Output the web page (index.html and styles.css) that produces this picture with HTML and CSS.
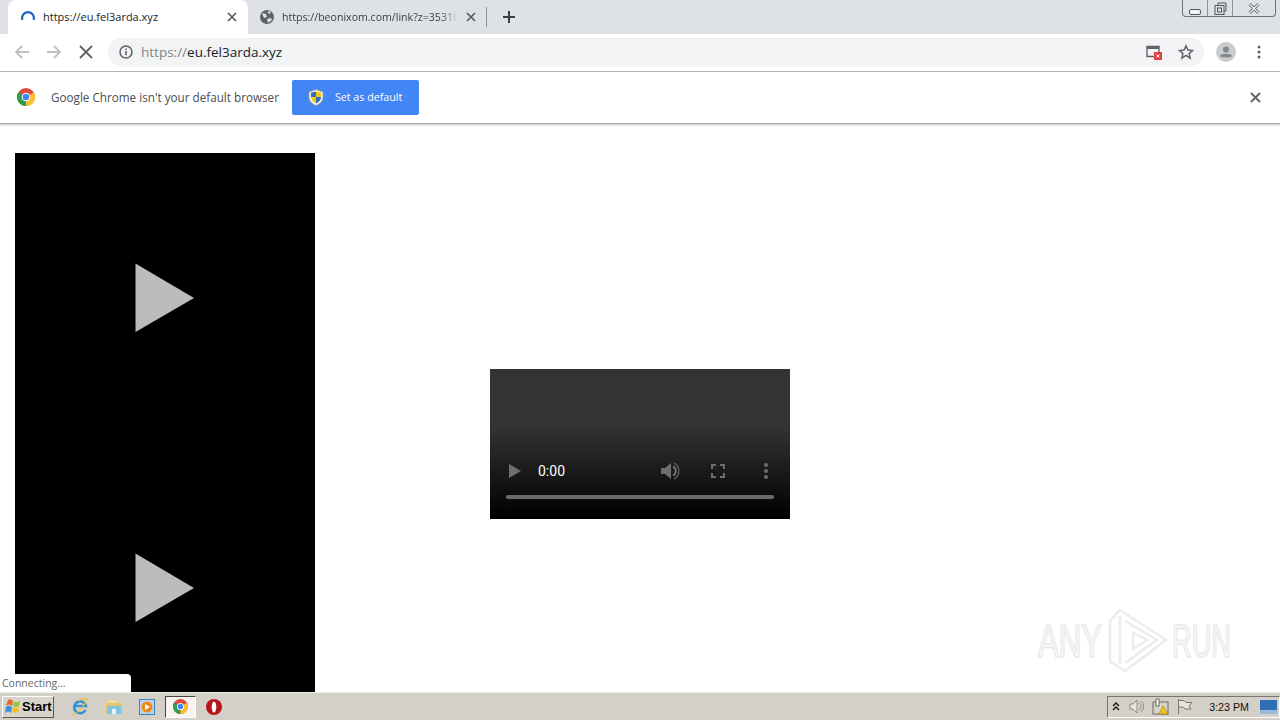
FILE: index.html
```html
<!DOCTYPE html>
<html lang="en">
<head>
    <meta charset="UTF-8">
    <title>https://eu.fel3arda.xyz</title>
    <link rel="stylesheet" href="styles.css">
</head>
<body>
  <div class="tabstrip">
    <div class="tab active">
      <svg class="tab-icon" width="16" height="16" viewBox="0 0 16 16"><path d="M2.300 11A6 6 0 1 1 13.700 11" fill="none" stroke="#1a63c9" stroke-width="2.200"/></svg>
      <span class="tab-title">https://eu.fel3arda.xyz</span>
      <svg class="tab-close" width="10" height="10" viewBox="0 0 10 10"><path d="M1 1L9 9M9 1L1 9" stroke="#555a60" stroke-width="1.700"/></svg>
    </div>
    <div class="tab second">
      <svg class="tab-icon" width="16" height="16" viewBox="0 0 16 16"><circle cx="8" cy="8" r="7" fill="#5f6368"/><path d="M3 4l4 1 1 3-3 1zM9 2l3 1-1 2-2-1zM8 10l4-1 1 2-4 3z" fill="#dee1e6"/></svg>
      <span class="tab-title fade">https://beonixom.com/link?z=35316</span>
      <svg class="tab-close" width="10" height="10" viewBox="0 0 10 10"><path d="M1 1L9 9M9 1L1 9" stroke="#555a60" stroke-width="1.700"/></svg>
    </div>
    <div class="tab-sep"></div>
    <svg class="new-tab" width="12" height="12" viewBox="0 0 12 12"><path d="M6 0V12M0 6H12" stroke="#3c4043" stroke-width="2"/></svg>
    <div class="win-buttons">
      <div class="win-btn min"><svg width="12" height="6" viewBox="0 0 12 6"><rect x="0.500" y="0.500" width="11" height="5" rx="1.500" fill="#f2f4f7" stroke="#555"/></svg></div>
      <div class="win-btn max"><svg width="13" height="13" viewBox="0 0 13 13"><path d="M4 3V1h8v8h-2" fill="none" stroke="#555"/><rect x="1" y="3.500" width="9" height="9" fill="none" stroke="#555"/><rect x="3.500" y="6" width="4" height="4" fill="none" stroke="#555"/></svg></div>
      <div class="win-btn close"><svg width="12" height="11" viewBox="0 0 12 11"><path d="M1.500 1L10.500 10M10.500 1L1.500 10" stroke="#666" stroke-width="3"/><path d="M1.500 1L10.500 10M10.500 1L1.500 10" stroke="#f2f4f7" stroke-width="1.200"/></svg></div>
    </div>
  </div>

  <div class="toolbar">
    <svg class="nav-icon" width="16" height="16" viewBox="0 0 16 16"><path d="M15 8H2M8 2L2 8l6 6" fill="none" stroke="#bdc1c6" stroke-width="1.800"/></svg>
    <svg class="nav-icon" width="16" height="16" viewBox="0 0 16 16"><path d="M1 8h13M8 2l6 6-6 6" fill="none" stroke="#bdc1c6" stroke-width="1.800"/></svg>
    <svg class="nav-icon stop" width="16" height="16" viewBox="0 0 16 16"><path d="M2 2L14 14M14 2L2 14" stroke="#5f6368" stroke-width="1.900"/></svg>
    <div class="omnibox">
      <svg class="info" width="14" height="14" viewBox="0 0 14 14"><circle cx="7" cy="7" r="6" fill="none" stroke="#5f6368" stroke-width="1.500"/><path d="M7 6v4.200M7 3.400v1.600" stroke="#5f6368" stroke-width="1.600"/></svg>
      <span class="url"><span class="scheme">https://</span>eu.fel3arda.xyz</span>
      <svg class="popup-blocked" width="16" height="15" viewBox="0 0 16 15"><path d="M1 1.500h12v10H1z" fill="none" stroke="#5f6368" stroke-width="1.400"/><rect x="1" y="1" width="12" height="3" fill="#5f6368"/><rect x="8" y="7" width="8" height="8" fill="#e0403a"/><path d="M10.500 9.500l3 3M13.500 9.500l-3 3" stroke="#fff"/></svg>
      <svg class="star" width="16" height="16" viewBox="0 0 16 16"><path d="M8 1.800l1.900 4.200 4.600.5-3.400 3.100 1 4.500L8 11.300l-4.100 2.800 1-4.500L1.500 6.500 6.100 6z" fill="none" stroke="#5f6368" stroke-width="1.500"/></svg>
    </div>
    <svg class="avatar" width="20" height="20" viewBox="0 0 20 20"><circle cx="10" cy="10" r="10" fill="#c9cbce"/><circle cx="10" cy="7.500" r="3" fill="#85888c"/><path d="M4 14c1-3 11-3 12 0-1 2-11 2-12 0z" fill="#85888c"/></svg>
    <svg class="menu" width="4" height="14" viewBox="0 0 4 14"><circle cx="2" cy="2" r="1.500" fill="#5f6368"/><circle cx="2" cy="7" r="1.500" fill="#5f6368"/><circle cx="2" cy="12" r="1.500" fill="#5f6368"/></svg>
  </div>

  <div class="infobar">
    <svg class="chrome-logo" width="18" height="18" viewBox="0 0 18 18"><circle cx="9" cy="9" r="9" fill="#dd4b3e"/><path d="M9 9L1.200 4.500A9 9 0 0 0 9 18z" fill="#2f9e52"/><path d="M9 9l7.800-4.500A9 9 0 0 1 9 18z" fill="#fbc02d"/><circle cx="9" cy="9" r="4.300" fill="#fff"/><circle cx="9" cy="9" r="3.300" fill="#4285f4"/></svg>
    <span class="infobar-text">Google Chrome isn't your default browser</span>
    <div class="default-btn">
      <svg width="16" height="17" viewBox="0 0 16 17"><path d="M8 0.500L15 3v5c0 4-3 7-7 8.500C4 15 1 12 1 8V3z" fill="#f4f4e8" stroke="#9aa3ad"/><path d="M8 2.500V8H3V3.800zM8 8h5c0 3-2 5-5 6.500z" fill="#2b6fc4"/><path d="M8 2.500l5 1.300V8H8zM8 8v6.500C5 13 3 11 3 8z" fill="#f2c811"/></svg>
      <span>Set as default</span>
    </div>
    <svg class="infobar-close" width="11" height="11" viewBox="0 0 11 11"><path d="M1 1L10 10M10 1L1 10" stroke="#5f6368" stroke-width="1.800"/></svg>
  </div>

  <div class="content">
    <div class="black-video">
      <svg class="big-play" width="60" height="70" viewBox="0 0 60 70"><path d="M0.500 0.500V69L59 35z" fill="#bcbcbc"/></svg>
      <svg class="big-play" width="60" height="70" viewBox="0 0 60 70"><path d="M0.500 0.500V69L59 35z" fill="#bcbcbc"/></svg>
    </div>
    <div class="video">
      <div class="controls">
        <svg width="12" height="14" viewBox="0 0 12 14"><path d="M0 0V14L12 7z" fill="#6e6e6e"/></svg>
        <span class="time">0:00</span>
        <svg class="vol" width="20" height="18" viewBox="0 0 20 18"><path d="M0 6h4l6-5v16l-6-5H0z" fill="#6e6e6e"/><path d="M12 4.500a5 5 0 0 1 0 9" fill="none" stroke="#6e6e6e" stroke-width="2"/><path d="M13 1a9 9 0 0 1 0 16" fill="none" stroke="#5a5a5a" stroke-width="1.500"/></svg>
        <svg class="full" width="14" height="14" viewBox="0 0 14 14"><path d="M1 5V1h4M9 1h4v4M13 9v4H9M5 13H1V9" fill="none" stroke="#6e6e6e" stroke-width="2"/></svg>
        <svg class="more" width="4" height="16" viewBox="0 0 4 16"><circle cx="2" cy="2" r="2" fill="#6e6e6e"/><circle cx="2" cy="8" r="2" fill="#6e6e6e"/><circle cx="2" cy="14" r="2" fill="#6e6e6e"/></svg>
      </div>
      <div class="timeline"></div>
    </div>
    <div class="status-bubble">Connecting...</div>
    <svg class="watermark" width="204" height="66" viewBox="0 0 204 66">
      <g fill="#fbfbfb" stroke="#ececec" stroke-width="2.200" font-family="Liberation Sans, sans-serif" font-size="47">
        <text x="1" y="49" textLength="64" lengthAdjust="spacingAndGlyphs">ANY</text>
        <text x="135" y="49" textLength="59" lengthAdjust="spacingAndGlyphs">RUN</text>
      </g>
      <path d="M83 2L129 32 88 63 73 53V13zM83 8V56M88 13L120 32 88 55M96 25L110 32 96 41z" fill="none" stroke="#ececec" stroke-width="2.500"/>
    </svg>
  </div>

  <div class="taskbar">
    <div class="start">
      <svg width="18" height="17" viewBox="0 0 18 17"><path d="M4 2C6 0 8 2 9 3L8 8C6 6 4 6 2 8z" fill="#e8642a"/><path d="M10 3c2 2 4 1 6 0l-1 5c-2 1-4 1-6 0z" fill="#8cc63f"/><path d="M2 9c2-2 4-1 6 0l-1 6c-2-2-4-2-6 0z" fill="#3a8fdc"/><path d="M9 9c2 1 4 1 6 0l-1 5c-2 1-4 1-6 0z" fill="#f5c11e"/></svg>
      <span>Start</span>
    </div>
    <div class="quick">
      <svg width="18" height="18" viewBox="0 0 18 18"><path d="M14.500 12A6 6 0 1 1 15 8H4" fill="none" stroke="#2f8fd8" stroke-width="2.600"/><path d="M1 17C5 17 14 8 16 1c-3-1-6 0-9 2" fill="none" stroke="#e8c040" stroke-width="1.100"/></svg>
      <svg width="18" height="17" viewBox="0 0 18 17"><path d="M1 5h16v11H1z" fill="#e8c56a"/><path d="M3 2h8l1 3H3z" fill="#f2dc9a"/><rect x="2" y="8" width="14" height="8" fill="#7ec3e0"/><rect x="7" y="11" width="4" height="5" fill="#e8f4f8"/></svg>
      <svg width="16" height="16" viewBox="0 0 16 16"><rect x="0.500" y="0.500" width="15" height="15" fill="#bcd4ea" stroke="#3d83c2"/><circle cx="8" cy="8" r="5.500" fill="#ee8a1c"/><path d="M6 5v6l5-3z" fill="#fff"/></svg>
      <div class="task-active">
        <svg width="15" height="15" viewBox="0 0 18 18"><circle cx="9" cy="9" r="9" fill="#dd4b3e"/><path d="M9 9L1.200 4.500A9 9 0 0 0 9 18z" fill="#2f9e52"/><path d="M9 9l7.800-4.500A9 9 0 0 1 9 18z" fill="#fbc02d"/><circle cx="9" cy="9" r="4.300" fill="#fff"/><circle cx="9" cy="9" r="3.300" fill="#4285f4"/></svg>
      </div>
      <svg width="16" height="16" viewBox="0 0 16 16"><circle cx="8" cy="8" r="8" fill="#b8141c"/><ellipse cx="8" cy="8" rx="2.300" ry="5.500" fill="#fff"/></svg>
    </div>
    <div class="tray">
      <svg class="chevrons" width="8" height="9" viewBox="0 0 8 9"><path d="M1 4l3-3 3 3M1 8l3-3 3 3" fill="none" stroke="#111" stroke-width="1.300"/></svg>
      <svg width="17" height="15" viewBox="0 0 17 15"><path d="M1 5h3l4-4v13l-4-4H1z" fill="#e8e6e0" stroke="#8a8a88"/><path d="M10 4a4 4 0 0 1 0 7M12 2a7 7 0 0 1 0 11" fill="none" stroke="#8a8a88"/></svg>
      <svg width="17" height="17" viewBox="0 0 17 17"><rect x="1" y="4" width="15" height="12" fill="#d8d4c8" stroke="#6a6a60"/><rect x="4" y="1" width="3" height="7" fill="#fff" stroke="#6a6a60"/><path d="M11 8l5 8H7z" fill="#f5c518" stroke="#8a6a10" stroke-width="0.500"/></svg>
      <svg class="flag" width="16" height="15" viewBox="0 0 16 15"><path d="M1.500 0v15" stroke="#77776f"/><path d="M2 1.500h5l2 2h6l-3 3.500 2 3H8L6 8H2" fill="#e6e4dc" stroke="#77776f"/></svg>
      <span class="clock">3:23 PM</span>
      <svg class="show-desktop" width="17" height="14" viewBox="0 0 17 14"><rect width="17" height="14" fill="#2f6fb4"/><rect y="10" width="17" height="4" fill="#9ab8d8"/></svg>
    </div>
  </div>
</body>
</html>
```

FILE: styles.css
```css
html, body {
  margin: 0;
  height: 720px;
  overflow: hidden;
  background: #fff;
  font-family: "Open Sans", "Noto Sans", sans-serif;
}
body {
  display: flex;
  flex-direction: column;
}
svg {
  display: block;
  flex: none;
}

/* tabs */
.tabstrip {
  height: 34px;
  flex: none;
  background: #dee1e6;
  display: flex;
  align-items: center;
}
.tab {
  height: 34px;
  display: flex;
  align-items: center;
  font-size: 11px;
  color: #3c4043;
}
.tab.active {
  width: 240px;
  margin-left: 8px;
  padding: 0 11px 0 12px;
  box-sizing: border-box;
  background: #fff;
  border-radius: 8px 8px 0 0;
  color: #222;
}
.tab.second {
  width: 238px;
  padding: 0 10px 0 11px;
  box-sizing: border-box;
  font-size: 10.600px;
}
.tab-icon {
  margin-right: 7px;
}
.tab-title {
  flex: 1;
  overflow: hidden;
  white-space: nowrap;
  margin-top: -1px;
}
.tab-title.fade {
  -webkit-mask-image: linear-gradient(to right, #000 90%, transparent);
  mask-image: linear-gradient(to right, #000 90%, transparent);
}
.tab-close {
  margin-left: 8px;
}
.tab-sep {
  width: 1px;
  height: 20px;
  background: #8c8f94;
}
.new-tab {
  margin-left: 16px;
}
.win-buttons {
  margin-left: auto;
  margin-right: 4px;
  align-self: flex-start;
  display: flex;
  height: 16px;
  border: 1px solid #6f7378;
  border-top: 0;
  border-radius: 0 0 4px 4px;
}
.win-btn {
  display: flex;
  align-items: center;
  justify-content: center;
  width: 24px;
  border-left: 1px solid #8f9398;
}
.win-btn.min {
  border-left: 0;
  align-items: flex-end;
  padding-bottom: 1px;
  box-sizing: border-box;
}
.win-btn.close {
  width: 42px;
}

/* toolbar */
.toolbar {
  height: 36px;
  flex: none;
  background: #fff;
  border-bottom: 1px solid #b5b7ba;
  display: flex;
  align-items: center;
  padding: 0 0 1px 14px;
}
.nav-icon {
  margin-right: 16px;
}
.nav-icon.stop {
  margin-right: 14px;
}
.omnibox {
  width: 1096px;
  height: 28px;
  background: #f1f3f4;
  border-radius: 14px;
  display: flex;
  align-items: center;
  padding-left: 11px;
  box-sizing: border-box;
}
.url {
  margin-left: 8px;
  font-size: 13.500px;
  color: #202124;
  flex: 1;
}
.scheme {
  color: #80868b;
}
.popup-blocked {
  margin-right: 16px;
}
.star {
  margin-right: 10px;
}
.avatar {
  margin-left: 12px;
}
.menu {
  margin-left: 21px;
}

/* infobar */
.infobar {
  height: 51px;
  flex: none;
  display: flex;
  align-items: center;
  padding-left: 17px;
  border-bottom: 1px solid #a9abae;
  box-shadow: 0 1px 2px rgba(0, 0, 0, 0.25);
  position: relative;
}
.chrome-logo {
  margin-top: -1px;
}
.infobar-text {
  margin: -2px 0 0 16px;
  font-size: 11.700px;
  color: #4a4d51;
  white-space: nowrap;
}
.default-btn {
  margin-left: 13px;
  width: 127px;
  height: 35px;
  background: #4285f4;
  border-radius: 2px;
  display: flex;
  align-items: center;
  padding-left: 16px;
  box-sizing: border-box;
  color: #fff;
  font-size: 10.700px;
}
.default-btn span {
  margin: -2px 0 0 11px;
}
.infobar-close {
  margin-left: auto;
  margin-right: 19px;
}

/* page */
.content {
  flex: 1;
  min-height: 0;
  position: relative;
  overflow: hidden;
  display: flex;
  align-items: flex-start;
  padding: 29px 0 0 15px;
}
.black-video {
  width: 300px;
  height: 600px;
  flex: none;
  background: #000;
  display: flex;
  flex-direction: column;
  align-items: center;
  padding-top: 110px;
  gap: 220px;
  box-sizing: border-box;
}
.video {
  margin: 216px 0 0 175px;
  width: 300px;
  height: 150px;
  flex: none;
  background: linear-gradient(to bottom, #333 0, #333 38%, #000 100%);
  display: flex;
  flex-direction: column;
  justify-content: flex-end;
  padding: 0 16px 20px;
  box-sizing: border-box;
}
.controls {
  display: flex;
  align-items: center;
  height: 20px;
  margin-bottom: 14px;
  padding-left: 3px;
}
.time {
  margin-left: 17px;
  color: #fff;
  font-size: 14px;
  font-family: Roboto, sans-serif;
}
.vol {
  margin-left: auto;
}
.full {
  margin-left: 30px;
}
.more {
  margin-left: 39px;
  margin-right: 6px;
}
.timeline {
  height: 4px;
  background: #6a6a6a;
  border-radius: 2px;
}
.status-bubble {
  position: absolute;
  left: 0;
  bottom: 0;
  width: 131px;
  height: 18px;
  background: #fff;
  border-radius: 0 4px 0 0;
  font-size: 10.500px;
  line-height: 18px;
  padding-left: 2px;
  box-sizing: border-box;
  color: #666;
}
.watermark {
  position: absolute;
  left: 1037px;
  top: 484px;
}

/* taskbar */
.taskbar {
  height: 27px;
  flex: none;
  background: #d4d0c8;
  border-top: 1px solid #f2f0ea;
  display: flex;
  align-items: center;
}
.start {
  margin-left: 2px;
  width: 52px;
  height: 22px;
  box-sizing: border-box;
  background: #d8d4cc;
  border: 1px solid;
  border-color: #fff #555 #555 #fff;
  display: flex;
  align-items: center;
  padding-left: 1px;
  font-family: "Liberation Sans", sans-serif;
  font-weight: bold;
  font-size: 13px;
  color: #000;
}
.quick {
  margin-left: 17px;
  display: flex;
  align-items: center;
  gap: 16px;
}
.task-active {
  width: 31px;
  height: 22px;
  margin: 0 -6px;
  box-sizing: border-box;
  border: 1px solid;
  border-color: #444 #fff #fff #444;
  background: #f6f5f2;
  display: flex;
  align-items: center;
  justify-content: center;
}
.tray {
  margin-left: auto;
  height: 22px;
  border: 1px solid;
  border-color: #77756f #fff #fff #77756f;
  box-sizing: border-box;
  display: flex;
  align-items: center;
  padding-left: 4px;
  gap: 6px;
}
.chevrons {
  margin-right: 3px;
}
.flag {
  margin-left: 2px;
}
.clock {
  margin-left: 10px;
  font-family: "Liberation Sans", sans-serif;
  font-size: 10.700px;
  color: #111;
}
.show-desktop {
  margin-left: 5px;
  margin-right: 2px;
}
```
